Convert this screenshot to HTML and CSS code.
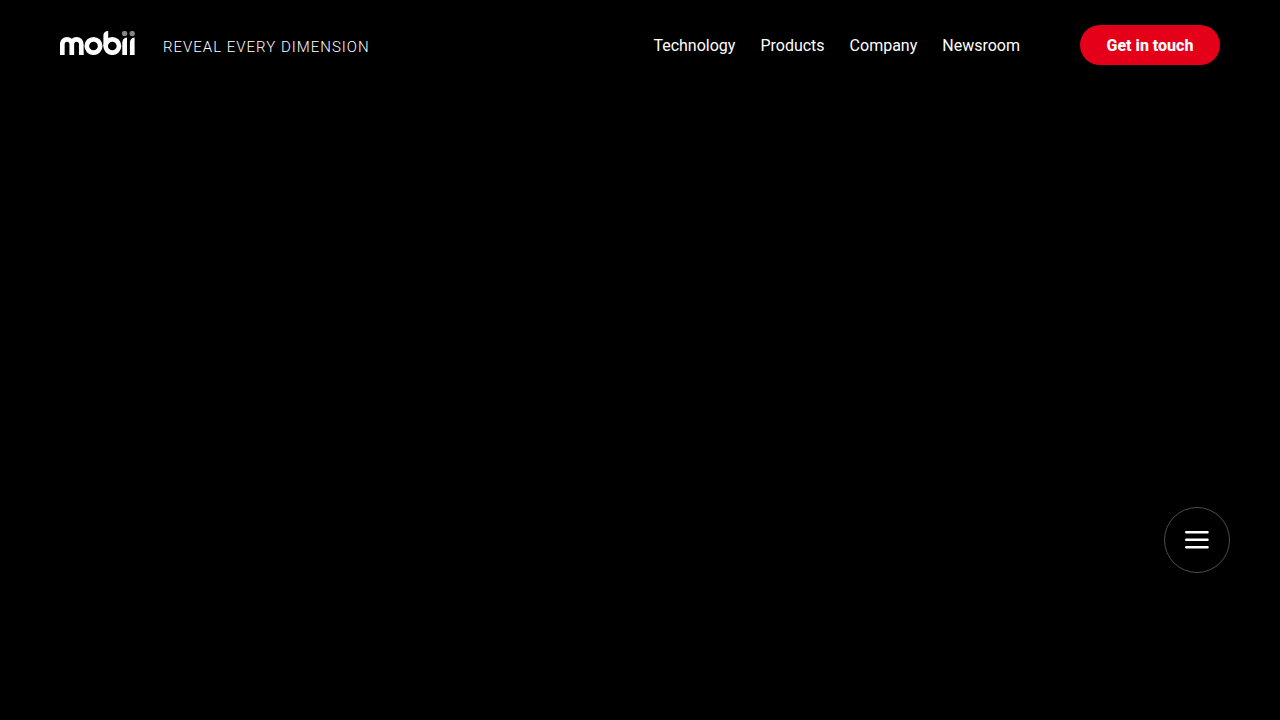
FILE: index.html
```html
<!DOCTYPE html>
<html lang="en">
<head>
<meta charset="utf-8">
<meta name="viewport" content="width=device-width, initial-scale=1">
<title>mobii</title>
<link rel="stylesheet" href="styles.css">
</head>
<body>
<header class="header">
  <a class="brand" href="#" aria-label="mobii home">
    <svg class="logo" viewBox="0 0 75 24" aria-hidden="true">
      <g fill="none" stroke="#fff" stroke-width="4.7">
        <path d="M2.3 24V13.2a4.75 4.9 0 0 1 9.5 0V24M11.8 24V13.2a4.75 4.9 0 0 1 9.5 0V24"/>
        <circle cx="33.5" cy="15" r="6.7"/>
        <circle cx="52.3" cy="15" r="6.7"/>
      </g>
      <path fill="#fff" d="M43.4 15V4.2Q43.5.2 48.2 0v10L45.4 15zM62.3 24V11.6Q62.4 7 67 6.4V24zM69.9 24V11.6Q70 7 74.6 6.4V24z"/>
      <g fill="#868686"><circle cx="64.6" cy="2.6" r="2.7"/><circle cx="72.2" cy="2.6" r="2.7"/></g>
    </svg>
    <span class="tagline">REVEAL EVERY DIMENSION</span>
  </a>
  <nav class="nav" aria-label="Main">
    <a href="#">Technology</a>
    <a href="#">Products</a>
    <a href="#">Company</a>
    <a href="#">Newsroom</a>
  </nav>
  <a class="contact" href="#">Get in touch</a>
</header>
<button class="menu" type="button" aria-label="Open menu">
  <svg class="menu-icon" viewBox="0 0 24 18" aria-hidden="true">
    <path d="M1.2 1.3h21.4M1.2 8.8h21.4M1.2 16.3h21.4" stroke="#fff" stroke-width="2.4" stroke-linecap="round"/>
  </svg>
</button>
</body>
</html>
```
FILE: styles.css
```css
* { box-sizing: border-box; }
body {
  margin: 0;
  min-height: 100vh;
  background: #000;
  color: #fff;
  font-family: Roboto, "Noto Sans", sans-serif;
  font-size: 16px;
  line-height: 20px;
}
a { color: inherit; text-decoration: none; }
.header {
  display: flex;
  align-items: center;
  padding: 25px 60px;
}
.brand {
  display: flex;
  align-items: center;
  gap: 28px;
  margin-right: auto;
}
.logo { display: block; width: 75px; height: 24px; margin-bottom: 4px; }
.tagline { padding-top: 4px; font-size: 15px; font-weight: 300; letter-spacing: 1px; }
.nav { display: flex; gap: 25px; padding-top: 2px; }
.contact {
  margin-left: 60px;
  width: 140px;
  padding: 11px 0 9px;
  border-radius: 20px;
  background: #e50019;
  font-weight: 800;
  text-align: center;
}
.menu {
  position: fixed;
  right: 50px;
  bottom: 147px;
  display: grid;
  place-items: center;
  width: 66px;
  height: 66px;
  padding: 0;
  border: 1px solid #4d4d4d;
  border-radius: 50%;
  background: #000;
}
.menu-icon { display: block; width: 24px; height: 18px; }
```
